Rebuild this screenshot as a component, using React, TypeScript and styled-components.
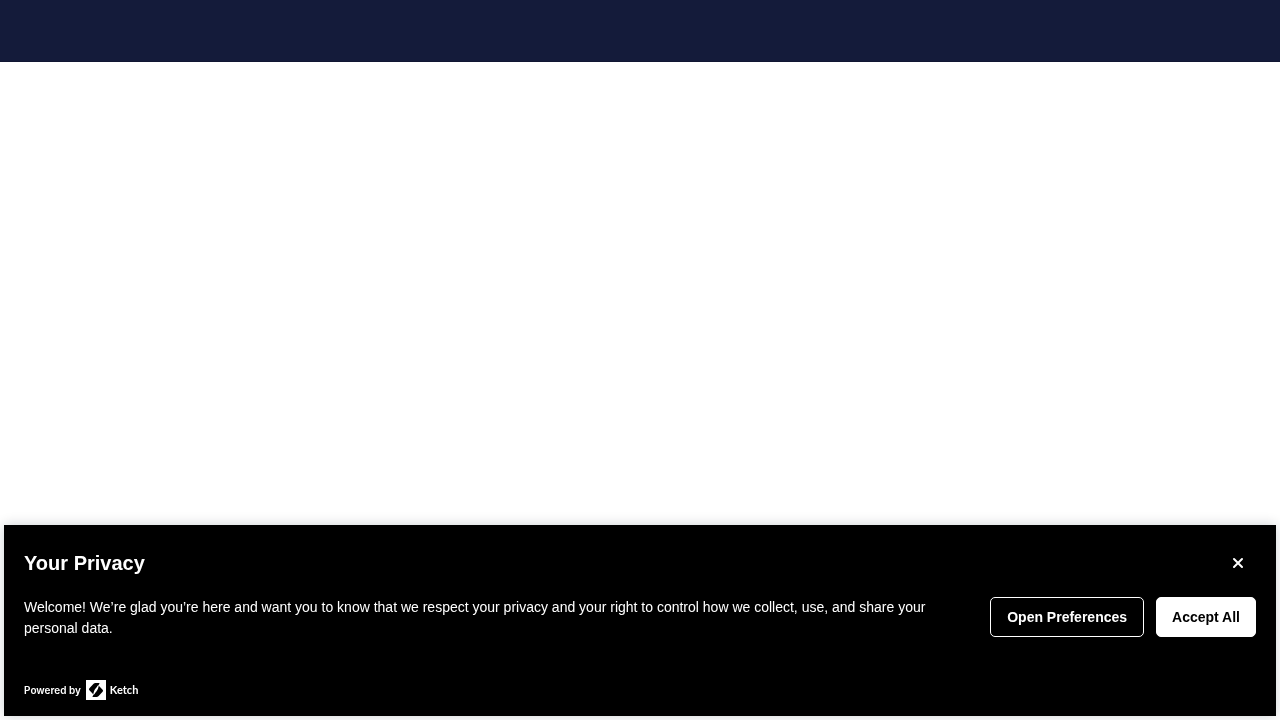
import React, { useState } from "react";
import styled, { createGlobalStyle } from "styled-components";

const GlobalStyle = createGlobalStyle`
  *, *::before, *::after { box-sizing: border-box; }
  body {
    margin: 0;
    background: #ffffff;
    font-family: "Liberation Sans", Arial, sans-serif;
  }
`;

const SiteHeader = styled.header`
  height: 62px;
  background: #141b3a;
  border-bottom: 1px solid #111632;
`;

const Banner = styled.section`
  position: fixed;
  left: 4px;
  right: 4px;
  bottom: 4px;
  padding: 24px 20px 16px;
  background: #000000;
  color: #ffffff;
  box-shadow: 0 0 12px rgba(7, 26, 36, 0.2);
`;

const BannerHeader = styled.div`
  display: flex;
  align-items: center;
  justify-content: space-between;
  height: 28px;
  padding-right: 8px;
`;

const Title = styled.h2`
  margin: 0;
  font-size: 20px;
  line-height: 28px;
  font-weight: 700;
`;

const CloseButton = styled.button`
  display: flex;
  align-items: center;
  justify-content: center;
  width: 20px;
  height: 20px;
  padding: 0;
  border: 0;
  background: transparent;
  color: inherit;
  cursor: pointer;
`;

const BannerBody = styled.div`
  display: flex;
  align-items: flex-start;
  gap: 40px;
  margin-top: 20px;
`;

const Message = styled.p`
  flex: 1;
  margin: 0;
  font-size: 14px;
  line-height: 21px;
`;

const Actions = styled.div`
  display: flex;
  gap: 12px;
`;

const ActionButton = styled.button<{ $filled?: boolean }>`
  height: 40px;
  padding: 0 ${(p) => (p.$filled ? 15 : 16)}px;
  border: 1px solid #ffffff;
  border-radius: 5px;
  background: ${(p) => (p.$filled ? "#ffffff" : "#000000")};
  color: ${(p) => (p.$filled ? "#000000" : "#ffffff")};
  font-family: inherit;
  font-size: 14px;
  font-weight: 700;
  white-space: nowrap;
  cursor: pointer;
`;

const PoweredBy = styled.a`
  display: flex;
  align-items: center;
  width: fit-content;
  margin-top: 41px;
  color: inherit;
  font-family: Inter, sans-serif;
  font-size: 10px;
  line-height: 20px;
  font-weight: 600;
  text-decoration: none;
`;

const Logo = styled.svg`
  display: block;
  margin: 0 4px 0 5px;
`;

const BrandName = styled.span`
  font-family: Lato, sans-serif;
  font-size: 11px;
  font-weight: 700;
`;

function KetchLogo() {
  return (
    <Logo width="20" height="20" viewBox="0 0 20 20" aria-hidden="true">
      <rect width="20" height="20" fill="#fff" />
      <path
        d="M13.6 3H9.4Q8.4 3 7.6 3.8L3.4 8.2Q2.4 9.2 3.4 10.3L7.9 14.9C7.3 12.5 8 10.4 9.8 8.3C11.2 6.6 13 5.2 13.6 3Z"
        fill="#000"
      />
      <path
        d="M6.4 17H10.6Q11.6 17 12.4 16.2L16.6 11.8Q17.6 10.8 16.6 9.7L12.1 5.1C12.7 7.5 12 9.6 10.2 11.7C8.8 13.4 7 14.8 6.4 17Z"
        fill="#000"
      />
      <path d="M12.3 5.4C12.2 8.8 8 10.8 7.7 14.6" fill="none" stroke="#fff" strokeWidth="1" />
    </Logo>
  );
}

export default function App() {
  const [open, setOpen] = useState(true);
  const close = () => setOpen(false);

  return (
    <>
      <GlobalStyle />
      <SiteHeader />
      {open && (
        <Banner role="dialog" aria-labelledby="privacy-title">
          <BannerHeader>
            <Title id="privacy-title">Your Privacy</Title>
            <CloseButton type="button" aria-label="Close" onClick={close}>
              <svg width="12" height="12" viewBox="0 0 12 12" aria-hidden="true">
                <path
                  d="M2 2L10 10M10 2L2 10"
                  stroke="currentColor"
                  strokeWidth="2"
                  strokeLinecap="round"
                />
              </svg>
            </CloseButton>
          </BannerHeader>
          <BannerBody>
            <Message>
              Welcome! We’re glad you’re here and want you to know that we respect your privacy and
              your right to control how we collect, use, and share your personal data.
            </Message>
            <Actions>
              <ActionButton type="button">Open Preferences</ActionButton>
              <ActionButton type="button" $filled onClick={close}>
                Accept All
              </ActionButton>
            </Actions>
          </BannerBody>
          <PoweredBy href="#ketch">
            Powered by
            <KetchLogo />
            <BrandName>Ketch</BrandName>
          </PoweredBy>
        </Banner>
      )}
    </>
  );
}
